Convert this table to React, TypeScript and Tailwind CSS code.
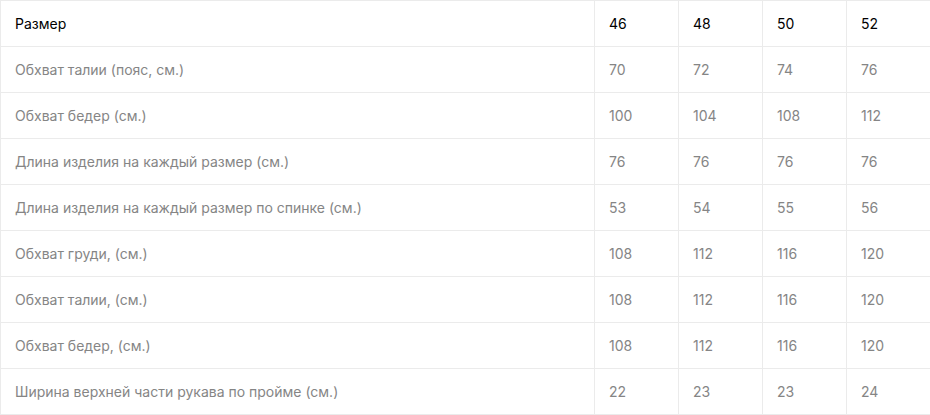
const rows: [string, string[]][] = [
  ['Обхват талии (пояс, см.)', ['70', '72', '74', '76']],
  ['Обхват бедер (см.)', ['100', '104', '108', '112']],
  ['Длина изделия на каждый размер (см.)', ['76', '76', '76', '76']],
  ['Длина изделия на каждый размер по спинке (см.)', ['53', '54', '55', '56']],
  ['Обхват груди, (см.)', ['108', '112', '116', '120']],
  ['Обхват талии, (см.)', ['108', '112', '116', '120']],
  ['Обхват бедер, (см.)', ['108', '112', '116', '120']],
  ['Ширина верхней части рукава по пройме (см.)', ['22', '23', '23', '24']],
];

export default function App() {
  return (
    <div className="w-[930px] bg-white font-['Inter',sans-serif] text-[14px]">
      <table className="w-[930px] table-fixed border-collapse">
        <colgroup>
          <col className="w-[594px]" />
          <col className="w-[84px]" />
          <col className="w-[84px]" />
          <col className="w-[84px]" />
          <col className="w-[84px]" />
        </colgroup>
        <tbody>
          <tr className="h-[46px] text-black">
            <td className="border border-[#ebebeb] px-[14px] align-middle">Размер</td>
            {['46', '48', '50', '52'].map((s) => (
              <td key={s} className="border border-[#ebebeb] px-[14px] align-middle">
                {s}
              </td>
            ))}
          </tr>
          {rows.map(([label, vals], i) => (
            <tr key={i} className="h-[46px] text-[#858585]">
              <td className="border border-[#ebebeb] px-[14px] align-middle">{label}</td>
              {vals.map((v, j) => (
                <td key={j} className="border border-[#ebebeb] px-[14px] align-middle">
                  {v}
                </td>
              ))}
            </tr>
          ))}
        </tbody>
      </table>
    </div>
  );
}
